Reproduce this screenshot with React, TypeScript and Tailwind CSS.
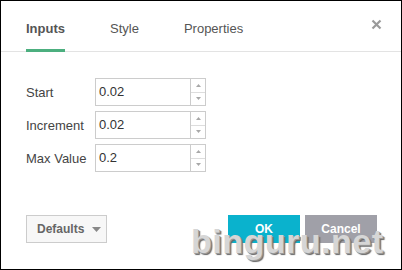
import React from "react";

function Spinner() {
  return (
    <div className="flex w-[15px] flex-col border-l border-[#cccccc]">
      <div className="flex flex-1 items-center justify-center border-b border-[#dddddd]">
        <svg width="5" height="3" viewBox="0 0 5 3"><path d="M2.5 0L5 3H0z" fill="#a8a8a8" /></svg>
      </div>
      <div className="flex flex-1 items-center justify-center">
        <svg width="5" height="3" viewBox="0 0 5 3"><path d="M0 0H5L2.5 3z" fill="#a8a8a8" /></svg>
      </div>
    </div>
  );
}

function Field({ label, value }: { label: string; value: string }) {
  return (
    <div className="flex h-[28px] items-center">
      <div className="w-[69px] text-[13px] leading-[15px] text-[#444]">{label}</div>
      <div className="flex h-full w-[111px] border border-[#cccccc] bg-white">
        <div className="flex flex-1 items-center pl-[3px] text-[13px] text-[#333]">{value}</div>
        <Spinner />
      </div>
    </div>
  );
}

export default function App() {
  return (
    <div
      className="relative h-[270px] w-[402px] overflow-hidden border border-black bg-white"
      style={{ fontFamily: '"Liberation Sans", Arial, sans-serif' }}
    >
      <div className="flex h-[51px] border-b border-[#e3e3e3] pl-[25px] pr-[19px]">
        <div className="flex gap-[45px]">
          <div className="-mb-px border-b-[3px] border-[#4caf7f] pt-[20px] text-[13px] font-bold leading-[15px] text-[#555]">
            Inputs
          </div>
          <div className="pt-[20px] text-[13px] leading-[15px] text-[#555]">Style</div>
          <div className="pt-[20px] text-[13px] leading-[15px] text-[#555]">Properties</div>
        </div>
        <div className="ml-auto pt-[18px]">
          <svg width="11" height="11" viewBox="0 0 11 11">
            <path d="M1.5 1.5L9.5 9.5M9.5 1.5L1.5 9.5" stroke="#9a9a9a" strokeWidth="2.2" />
          </svg>
        </div>
      </div>

      <div className="flex flex-col gap-[5px] pl-[25px] pt-[26px]">
        <Field label="Start" value="0.02" />
        <Field label="Increment" value="0.02" />
        <Field label="Max Value" value="0.2" />
      </div>

      <div className="mt-[43px] flex items-center pl-[25px] pr-[24px]">
        <div className="flex h-[28px] w-[81px] items-center border border-[#cccccc] bg-[#f7f7f7] pl-[10px] text-[12px] font-bold text-[#666]">
          Defaults
          <svg className="ml-[8px]" width="9" height="5" viewBox="0 0 9 5"><path d="M0 0H9L4.5 5z" fill="#888" /></svg>
        </div>
        <div className="ml-auto flex gap-[5px]">
          <div className="flex h-[28px] w-[72px] items-center justify-center bg-[#0ab2cd] text-[12px] font-bold text-white">
            OK
          </div>
          <div className="flex h-[28px] w-[72px] items-center justify-center bg-[#a0a0a8] text-[12px] font-bold text-white">
            Cancel
          </div>
        </div>
      </div>

      <div className="absolute left-[190px] top-[223px] text-[34px] font-bold leading-none tracking-[0.5px] text-[#d6d6d6] [text-shadow:1px_1px_0_#9a9a9a,2px_2px_1px_#666]">
        binguru.net
      </div>
    </div>
  );
}
